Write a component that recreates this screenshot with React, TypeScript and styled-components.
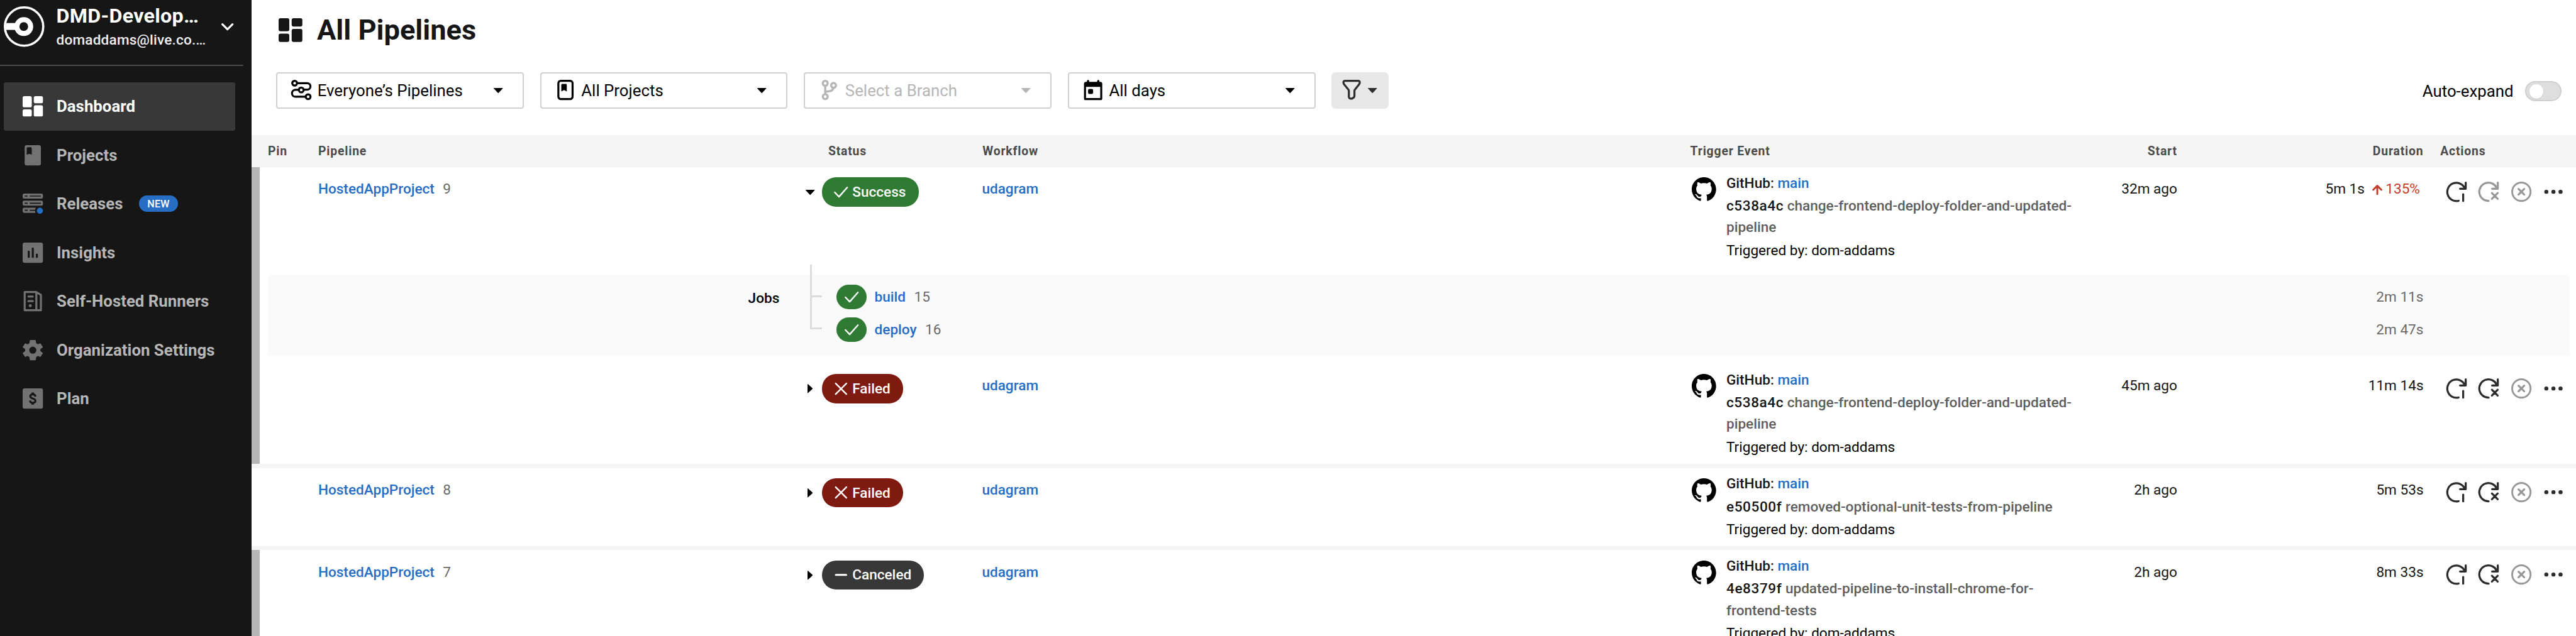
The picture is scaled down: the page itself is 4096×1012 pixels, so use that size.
import React from "react";
import styled, { createGlobalStyle, css } from "styled-components";

/* 1rem equals ten layout units; the whole page scales with the viewport width. */
const GlobalStyle = createGlobalStyle`
  html { font-size: calc(100vw / 253.8); }
  * { box-sizing: border-box; }
  body {
    margin: 0;
    overflow: hidden;
    background: #fff;
    color: #000;
    font-family: Roboto, "Liberation Sans", sans-serif;
    font-size: 1.4rem;
  }
`;

const blue = "#266dc4";

/* ---------- layout ---------- */

const Page = styled.div`
  display: flex;
  width: 100vw;
  height: 100vh;
  overflow: hidden;
`;

const Sidebar = styled.aside`
  flex: none;
  width: 24.8rem;
  height: 100%;
  background: #161616;
  color: #fff;
`;

const Main = styled.main`
  flex: 1;
  min-width: 0;
`;

/* ---------- icons ---------- */

const Svg = styled.svg<{ $w?: number; $h?: number }>`
  display: block;
  flex: none;
  width: ${(p) => (p.$w ?? 20) / 10}rem;
  height: ${(p) => (p.$h ?? p.$w ?? 20) / 10}rem;
  overflow: visible;
`;

const stroke = {
  fill: "none",
  stroke: "currentColor",
  strokeWidth: 2,
  strokeLinecap: "round" as const,
  strokeLinejoin: "round" as const,
};

const DashboardIcon = ({ size = 20 }: { size?: number }) => (
  <Svg $w={size} viewBox="0 0 20 20" fill="currentColor">
    <rect x="0" y="0" width="9" height="11" rx="1.6" />
    <rect x="0" y="13" width="9" height="7" rx="1.6" />
    <rect x="11" y="0" width="9" height="7" rx="1.6" />
    <rect x="11" y="9" width="9" height="11" rx="1.6" />
  </Svg>
);

const ProjectsIcon = () => (
  <Svg viewBox="0 0 20 20" fill="currentColor">
    <path
      fillRule="evenodd"
      d="M3.8 0H16.2A1.8 1.8 0 0 1 18 1.8V18.2A1.8 1.8 0 0 1 16.2 20H3.8A1.8 1.8 0 0 1 2 18.2V1.8A1.8 1.8 0 0 1 3.8 0ZM5 2A1 1 0 0 0 4 3V9.5L6.6 8.5L9 9.5V3A1 1 0 0 0 8 2Z"
    />
  </Svg>
);

const ReleasesIcon = () => (
  <Svg viewBox="0 0 20 20" fill="currentColor">
    <path
      fillRule="evenodd"
      d="M1.5 0H18.5A1.5 1.5 0 0 1 20 1.5V3.5A1.5 1.5 0 0 1 18.5 5H1.5A1.5 1.5 0 0 1 0 3.5V1.5A1.5 1.5 0 0 1 1.5 0ZM2 2V3H5V2ZM7 2V3H18V2Z"
    />
    <path
      fillRule="evenodd"
      d="M1.5 7H18.5A1.5 1.5 0 0 1 20 8.5V10.5A1.5 1.5 0 0 1 18.5 12H1.5A1.5 1.5 0 0 1 0 10.5V8.5A1.5 1.5 0 0 1 1.5 7ZM2 9V10H5V9ZM7 9V10H18V9Z"
    />
    <path
      fillRule="evenodd"
      d="M1.5 14H13L12.2 16H7V17H12.2L12.6 19H1.5A1.5 1.5 0 0 1 0 17.5V15.5A1.5 1.5 0 0 1 1.5 14ZM2 16V17H5V16Z"
    />
    <circle cx="17" cy="17" r="3" fill={blue} />
  </Svg>
);

const InsightsIcon = () => (
  <Svg viewBox="0 0 20 20">
    <rect width="20" height="20" rx="2" fill="currentColor" />
    <g fill="#161616">
      <rect x="5" y="8" width="2" height="7" rx=".6" />
      <rect x="9" y="5" width="2" height="10" rx=".6" />
      <rect x="13" y="11" width="2" height="4" rx=".6" />
    </g>
  </Svg>
);

const RunnersIcon = () => (
  <Svg viewBox="0 0 20 20" fill="currentColor">
    <path
      fillRule="evenodd"
      d="M2 0H13.6L18.4 2.9Q19 3.2 19 3.9V19A1 1 0 0 1 18 20H2A1 1 0 0 1 1 19V1A1 1 0 0 1 2 0ZM3 2V18H12.5V2ZM14.5 2.9V18H17V4.3Z"
    />
    <rect x="4.7" y="4.5" width="6.3" height="2" rx="1" />
    <rect x="4.7" y="9" width="6.3" height="2" rx="1" />
    <circle cx="7.5" cy="14.5" r="1.5" />
  </Svg>
);

const GearIcon = () => (
  <Svg viewBox="0 0 20 20">
    <path
      fill="currentColor"
      stroke="currentColor"
      strokeWidth="1"
      strokeLinejoin="round"
      fillRule="evenodd"
      d="M7.6.5H12.4L12.9 3.5L15.1 4.8L17.3 3.8L19.4 7L17 8.8V11.2L19.4 13L17.3 16.2L15.1 15.2L12.9 16.5L12.4 19.5H7.6L7.1 16.5L4.9 15.2L2.7 16.2L.6 13L3 11.2V8.8L.6 7L2.7 3.8L4.9 4.8L7.1 3.5ZM10 6A4 4 0 1 0 10 14A4 4 0 1 0 10 6Z"
    />
  </Svg>
);

const PlanIcon = () => (
  <Svg viewBox="0 0 20 20">
    <rect width="20" height="20" rx="1.8" fill="currentColor" />
    <g fill="none" stroke="#161616" strokeWidth="1.9">
      <path d="M12.6 8.1C12.5 6.7 11.5 5.9 10 5.9C8.5 5.9 7.5 6.7 7.5 7.8C7.5 9.2 8.8 9.6 10 10C11.4 10.4 12.6 10.9 12.6 12.3C12.6 13.5 11.5 14.2 10 14.2C8.5 14.2 7.4 13.4 7.4 11.9" />
      <path d="M10 4V6M10 14V16" strokeWidth="2.4" />
    </g>
  </Svg>
);

const PipelinesIcon = () => (
  <Svg viewBox="0 0 20 20">
    <g {...stroke} strokeLinecap="butt">
      <circle cx="3.4" cy="3.3" r="2.35" />
      <circle cx="9.9" cy="10" r="2.35" />
      <circle cx="16.7" cy="16.7" r="2.35" />
      <path d="M5.8 3.3H15.8A3.2 3.2 0 0 1 15.8 9.7H12.2" />
      <path d="M14.3 16.7H4.2A3.3 3.3 0 0 1 4.2 9.9H7.6" />
    </g>
  </Svg>
);

const ProjectOutlineIcon = () => (
  <Svg viewBox="0 0 20 20">
    <rect x="3" y="1" width="14" height="18" rx="2.4" {...stroke} />
    <path
      fill="currentColor"
      d="M6.8 4H10.4A.9.9 0 0 1 11.3 4.9V11.5L8.6 10L5.9 11.5V4.9A.9.9 0 0 1 6.8 4Z"
    />
  </Svg>
);

const BranchIcon = () => (
  <Svg viewBox="0 0 20 20">
    <g {...stroke} strokeLinecap="butt" strokeWidth="2.1">
      <circle cx="6.3" cy="3.4" r="2.4" />
      <circle cx="14.5" cy="5.5" r="2.4" />
      <circle cx="6.3" cy="16.6" r="2.4" />
      <path d="M6.3 5.8V14.2" />
      <path d="M14.2 7.9C13.9 10.2 12.6 11.1 10.4 11.2C8.2 11.3 6.8 11.5 6.3 12.6" />
    </g>
  </Svg>
);

const CalendarIcon = () => (
  <Svg viewBox="0 0 20 20" fill="currentColor">
    <path
      fillRule="evenodd"
      d="M3 2H17A2 2 0 0 1 19 4V18.4A1.6 1.6 0 0 1 17.4 20H2.6A1.6 1.6 0 0 1 1 18.4V4A2 2 0 0 1 3 2ZM3 7V18H17V7Z"
    />
    <rect x="3.9" y=".2" width="2.2" height="3.6" rx="1" />
    <rect x="14" y=".2" width="2.2" height="3.6" rx="1" />
    <rect x="5" y="9" width="5" height="5" rx="1.4" />
  </Svg>
);

const FilterIcon = () => (
  <Svg viewBox="0 0 20 20">
    <path
      {...stroke}
      d="M3.4 1H16.6Q18.4 1.2 18 3Q17.8 4 17 5L13.3 9.6Q12.8 10.2 12.8 11V15.8Q12.8 16.8 12 17.5Q10.6 18.7 9 18.6Q7.4 18.2 7.3 16.6V11Q7.2 10.2 6.8 9.6L3 5Q2.2 4 2 3Q1.6 1.2 3.4 1Z"
    />
  </Svg>
);

const ChevronIcon = () => (
  <Svg $w={12} $h={7} viewBox="0 0 12 7">
    <path {...stroke} d="M1 1L6 6L11 1" />
  </Svg>
);

const CaretDown = () => (
  <Svg $w={9} $h={5} viewBox="0 0 9 5" fill="currentColor">
    <path d="M.3 0H8.7Q9.1.1 8.9.5L4.9 4.8Q4.5 5.1 4.1 4.8L.1.5Q-.1.1.3 0Z" />
  </Svg>
);

const CaretRight = () => (
  <Svg $w={5} $h={9} viewBox="0 0 5 9" fill="currentColor">
    <path d="M0 .3Q.1-.1.5.1L4.8 4.1Q5.1 4.5 4.8 4.9L.5 8.9Q.1 9.1 0 8.7Z" />
  </Svg>
);

const CheckIcon = () => (
  <Svg $w={14} $h={11} viewBox="0 0 14 11">
    <path {...stroke} strokeWidth="1.5" d="M.8 5.6L5 10L13.1.8" />
  </Svg>
);

const CrossIcon = () => (
  <Svg $w={14} $h={12} viewBox="0 0 14 12">
    <path {...stroke} strokeWidth="1.5" d="M1.7.7L12.3 11.3M12.3.7L1.7 11.3" />
  </Svg>
);

const MinusIcon = () => (
  <Svg $w={14} $h={12} viewBox="0 0 14 12">
    <path {...stroke} strokeWidth="1.9" d="M1.9 6H12.1" />
  </Svg>
);

const ArrowUpIcon = () => (
  <Svg $w={10} viewBox="0 0 10 10">
    <path {...stroke} strokeWidth="1.8" d="M5 9.2V1.2M1 5L5 1L9 5" />
  </Svg>
);

const GithubIcon = () => (
  <Svg $w={24} viewBox="0 0 16 16" fill="#000">
    <path d="M8 0C3.58 0 0 3.58 0 8c0 3.54 2.29 6.53 5.47 7.59.4.07.55-.17.55-.38 0-.19-.01-.82-.01-1.49-2.01.37-2.53-.49-2.69-.94-.09-.23-.48-.94-.82-1.13-.28-.15-.68-.52-.01-.53.63-.01 1.08.58 1.23.82.72 1.21 1.87.87 2.33.66.07-.52.28-.87.51-1.07-1.78-.2-3.64-.89-3.64-3.95 0-.87.31-1.59.82-2.15-.08-.2-.36-1.02.08-2.12 0 0 .67-.21 2.2.82.64-.18 1.32-.27 2-.27s1.36.09 2 .27c1.53-1.04 2.2-.82 2.2-.82.44 1.1.16 1.92.08 2.12.51.56.82 1.27.82 2.15 0 3.07-1.87 3.75-3.65 3.95.29.25.54.73.54 1.48 0 1.07-.01 1.93-.01 2.2 0 .21.15.46.55.38A8.01 8.01 0 0 0 16 8c0-4.42-3.58-8-8-8Z" />
  </Svg>
);

const RerunIcon = () => (
  <Svg viewBox="0 0 20 20">
    <path {...stroke} d="M18 6.4A9 9 0 1 0 12 18.9M19 1V7H13.4M16.5 12.4V19" />
  </Svg>
);

const RerunFailedIcon = () => (
  <Svg viewBox="0 0 20 20">
    <path
      {...stroke}
      d="M18 6.4A9 9 0 1 0 9.9 19M19 1V7H13.4M13.2 11.3L18.9 17M18.9 11.3L13.2 17"
    />
  </Svg>
);

const CancelIcon = () => (
  <Svg viewBox="0 0 20 20">
    <circle cx="10" cy="10" r="9.05" {...stroke} strokeWidth="1.8" />
    <path {...stroke} d="M7.2 7.2L12.8 12.8M12.8 7.2L7.2 12.8" />
  </Svg>
);

const MoreIcon = () => (
  <Svg viewBox="0 0 20 20" fill="currentColor">
    <circle cx="3" cy="10" r="2" />
    <circle cx="10" cy="10" r="2" />
    <circle cx="17" cy="10" r="2" />
  </Svg>
);

const LogoIcon = () => (
  <Svg $w={40} viewBox="0 0 40 40">
    <circle cx="20" cy="20" r="18.9" fill="none" stroke="#fff" strokeWidth="2.2" />
    <circle cx="19.7" cy="20" r="6.8" fill="none" stroke="#fff" strokeWidth="5" />
    <path d="M2 16.5H12V23.3H2Z" fill="#fff" />
  </Svg>
);

/* ---------- sidebar ---------- */

const OrgHeader = styled.div`
  display: flex;
  width: 24rem;
  height: 6.5rem;
  padding: 0.4rem 1rem 0 0.4rem;
  border-bottom: 2px solid #4a4a4a;
`;

const OrgLogo = styled.div`
  padding-top: 0.2rem;
`;

const OrgText = styled.div`
  width: 16.25rem;
  margin-left: 1.15rem;
`;

const OrgName = styled.div`
  font-size: 2rem;
  line-height: 2.4rem;
  font-weight: 700;
  letter-spacing: 0.016rem;
  white-space: nowrap;
`;

const OrgEmail = styled.div`
  font-size: 1.4rem;
  line-height: 2.4rem;
  font-weight: 500;
  letter-spacing: 0.012rem;
  color: #f0f0f0;
  white-space: nowrap;
`;

const OrgChevron = styled.div`
  padding-top: 1.9rem;
`;

const Nav = styled.nav`
  display: flex;
  flex-direction: column;
  padding: 1.6rem 1.6rem 0 0.4rem;
`;

const NavItem = styled.a<{ $active?: boolean }>`
  display: flex;
  align-items: center;
  height: 4.8rem;
  padding-left: 1.8rem;
  border-radius: 0.2rem;
  font-size: 1.6rem;
  font-weight: 700;
  color: #727272;
  ${(p) =>
    p.$active &&
    css`
      background: #383838;
      color: #fff;
    `}
`;

const NavLabel = styled.span<{ $active?: boolean }>`
  margin-left: 1.38rem;
  color: ${(p) => (p.$active ? "#fff" : "#b6b6b6")};
`;

const NewBadge = styled.span`
  display: flex;
  align-items: center;
  justify-content: center;
  width: 3.8rem;
  height: 1.6rem;
  margin-left: 1.6rem;
  border-radius: 0.8rem;
  background: ${blue};
  color: #fff;
  font-size: 1rem;
  font-weight: 500;
  letter-spacing: 0.02rem;
`;

/* ---------- page header ---------- */

const TitleBar = styled.header`
  display: flex;
  align-items: center;
  height: 5.88rem;
  padding-left: 2.64rem;
  color: #161616;
`;

const Title = styled.h1`
  margin: 0 0 0 1.45rem;
  font-size: 2.8rem;
  line-height: 3.2rem;
  font-weight: 700;
`;

const Toolbar = styled.div`
  display: flex;
  align-items: center;
  height: 3.6rem;
  margin: 1.22rem 1.4rem 2.6rem 2.4rem;
`;

const Select = styled.button<{ $disabled?: boolean }>`
  display: flex;
  align-items: center;
  width: 24.4rem;
  height: 3.6rem;
  margin: 0 1.6rem 0 0;
  padding: 0 1.95rem 0 1.38rem;
  border: 2px solid #d0d0d0;
  border-radius: 0.25rem;
  background: #fff;
  font: inherit;
  font-size: 1.6rem;
  text-align: left;
  color: ${(p) => (p.$disabled ? "#b6b6b6" : "#000")};
`;

const SelectLabel = styled.span`
  flex: 1;
  margin-left: 0.57rem;
`;

const FilterButton = styled.button`
  display: flex;
  align-items: center;
  gap: 0.55rem;
  width: 5.6rem;
  height: 3.6rem;
  padding: 0 0 0 1rem;
  border: 0;
  border-radius: 0.4rem;
  background: #e8e8e8;
  color: #2e2e2e;
`;

const AutoExpand = styled.label`
  display: flex;
  align-items: center;
  gap: 1.16rem;
  margin: 0.2rem 0 0 auto;
  font-size: 1.6rem;
`;

const Toggle = styled.span`
  display: flex;
  align-items: center;
  width: 3.6rem;
  height: 2rem;
  padding-left: 0.28rem;
  border: 2px solid #cfcfcf;
  border-radius: 1rem;
  background: #dedede;
`;

const Knob = styled.span`
  width: 1.4rem;
  height: 1.4rem;
  border-radius: 50%;
  background: #fff;
  box-shadow: 0 0.05rem 0.1rem rgba(0, 0, 0, 0.12);
`;

/* ---------- table ---------- */

const columns = "4.95rem 48rem 17.4rem 69.75rem 39rem 9.01rem 24.27rem 1fr";

const HeadRow = styled.div`
  display: grid;
  grid-template-columns: ${columns};
  align-items: center;
  height: 3.2rem;
  padding-left: 1.6rem;
  background: #f5f5f5;
`;

const HeadCell = styled.div<{ $right?: boolean; $indent?: number }>`
  padding-left: ${(p) => p.$indent ?? 0}rem;
  font-size: 1.2rem;
  font-weight: 700;
  letter-spacing: 0.052rem;
  color: #4b4b4b;
  text-align: ${(p) => (p.$right ? "right" : "left")};
`;

const Group = styled.section`
  display: flex;
`;

const Stripe = styled.div<{ $visible?: boolean }>`
  flex: none;
  width: 0.8rem;
  margin-right: 0.8rem;
  background: ${(p) => (p.$visible ? "#b6b6b6" : "#fff")};
`;

const GroupBody = styled.div`
  flex: 1;
  min-width: 0;
`;

const Separator = styled.div`
  height: 0.4rem;
  background: #f5f5f5;
`;

const Row = styled.div<{ $tall?: boolean }>`
  display: grid;
  grid-template-columns: ${columns};
  align-items: start;
  height: ${(p) => (p.$tall ? 9.85 : 7.7)}rem;
  padding-top: 1rem;
`;

const Cell = styled.div<{ $right?: boolean }>`
  line-height: 2.4rem;
  white-space: nowrap;
  text-align: ${(p) => (p.$right ? "right" : "left")};
  color: #161616;
`;

const Link = styled.a`
  color: ${blue};
  font-weight: 500;
`;

const RunNumber = styled.span`
  margin-left: 0.83rem;
  color: #6a6a6a;
`;

const StatusCell = styled.div`
  display: flex;
  align-items: center;
`;

const CaretSlot = styled.div`
  display: flex;
  justify-content: center;
  width: 0.9rem;
  margin-right: 0.75rem;
`;

const tones = { success: "#307b34", failed: "#7f1a11", canceled: "#383838" };

const Badge = styled.span<{ $tone: keyof typeof tones }>`
  display: flex;
  align-items: center;
  gap: 0.4rem;
  height: 2.88rem;
  padding: 0 1.25rem 0 1.18rem;
  border-radius: 1.4rem;
  background: ${(p) => tones[p.$tone]};
  color: #fff;
  font-weight: 500;
`;

const Trigger = styled.div`
  display: flex;
  padding-left: 0.2rem;
`;

const TriggerText = styled.div`
  width: 35.3rem;
  margin: -0.47rem 0 0 0.99rem;
  font-weight: 500;
  line-height: 2.11rem;
  color: #161616;
`;

const Line = styled.div`
  margin-bottom: 0.15rem;
`;

const Commit = styled.span`
  letter-spacing: 0.036rem;
`;

const Message = styled.span`
  color: #5e5e5e;
`;

const By = styled.div`
  font-weight: 400;
  color: #000;
`;

const Duration = styled(Cell)`
  display: flex;
  align-items: center;
  justify-content: flex-end;
`;

const Trend = styled.span`
  display: flex;
  align-items: center;
  gap: 0.35rem;
  margin: 0 0.35rem 0 0.72rem;
  color: #c23d2b;
`;

const Actions = styled.div`
  display: flex;
  gap: 1.2rem;
  padding: 0.4rem 0 0 2.23rem;
`;

const ActionButton = styled.button<{ $off?: boolean }>`
  padding: 0;
  border: 0;
  background: none;
  color: ${(p) => (p.$off ? "#989898" : "#2c2c2c")};
`;

/* ---------- expanded jobs ---------- */

const Jobs = styled.div`
  display: grid;
  grid-template-columns: 52.95rem 1fr;
  height: 8rem;
  margin: 0.75rem 0.6rem 0.8rem 0;
  background: #fafafa;
`;

const JobsLabel = styled.div`
  padding: 1.14rem 2.56rem 0 0;
  line-height: 2.4rem;
  font-weight: 500;
  text-align: right;
`;

const JobsBody = styled.div`
  display: flex;
`;

const Tree = styled.div`
  width: 1.2rem;
  height: 6.4rem;
  margin: -1rem 1.4rem 0 0.45rem;
  border-left: 0.2rem solid #dcdcdc;
`;

const TreeArm = styled.div`
  height: 3.2rem;
  border-bottom: 0.2rem solid #dcdcdc;
`;

const JobList = styled.div`
  flex: 1;
  padding-top: 1rem;
`;

const JobRow = styled.div`
  display: flex;
  align-items: center;
  height: 2.4rem;
  margin-bottom: 0.8rem;
`;

const JobPill = styled.span`
  display: flex;
  align-items: center;
  justify-content: center;
  width: 3rem;
  height: 2.4rem;
  margin-right: 0.77rem;
  border-radius: 1.2rem;
  background: ${tones.success};
  color: #fff;
`;

const JobTime = styled.span`
  margin: 0 14.43rem 0 auto;
  color: #6a6a6a;
`;

/* ---------- data ---------- */

const navItems = [
  { label: "Dashboard", Icon: DashboardIcon, active: true },
  { label: "Projects", Icon: ProjectsIcon },
  { label: "Releases", Icon: ReleasesIcon, isNew: true },
  { label: "Insights", Icon: InsightsIcon },
  { label: "Self-Hosted Runners", Icon: RunnersIcon },
  { label: "Organization Settings", Icon: GearIcon },
  { label: "Plan", Icon: PlanIcon },
];

const selects = [
  { label: "Everyone’s Pipelines", Icon: PipelinesIcon },
  { label: "All Projects", Icon: ProjectOutlineIcon },
  { label: "Select a Branch", Icon: BranchIcon, disabled: true },
  { label: "All days", Icon: CalendarIcon },
];

const statusIcons = {
  success: CheckIcon,
  failed: CrossIcon,
  canceled: MinusIcon,
};

const statusLabels = {
  success: "Success",
  failed: "Failed",
  canceled: "Canceled",
};

interface Run {
  status: keyof typeof tones;
  number?: number;
  commit: string;
  message: string;
  start: string;
  duration: string;
  trend?: string;
  tall?: boolean;
  jobs?: { name: string; number: number; time: string }[];
}

const groups: { striped: boolean; runs: Run[] }[] = [
  {
    striped: true,
    runs: [
      {
        status: "success",
        number: 9,
        commit: "c538a4c",
        message: "change-frontend-deploy-folder-and-updated-pipeline",
        start: "32m ago",
        duration: "5m 1s",
        trend: "135%",
        tall: true,
        jobs: [
          { name: "build", number: 15, time: "2m 11s" },
          { name: "deploy", number: 16, time: "2m 47s" },
        ],
      },
      {
        status: "failed",
        commit: "c538a4c",
        message: "change-frontend-deploy-folder-and-updated-pipeline",
        start: "45m ago",
        duration: "11m 14s",
        tall: true,
      },
    ],
  },
  {
    striped: false,
    runs: [
      {
        status: "failed",
        number: 8,
        commit: "e50500f",
        message: "removed-optional-unit-tests-from-pipeline",
        start: "2h ago",
        duration: "5m 53s",
      },
    ],
  },
  {
    striped: true,
    runs: [
      {
        status: "canceled",
        number: 7,
        commit: "4e8379f",
        message: "updated-pipeline-to-install-chrome-for-frontend-tests",
        start: "2h ago",
        duration: "8m 33s",
        tall: true,
      },
    ],
  },
];

/* ---------- components ---------- */

const RunRow = ({ run }: { run: Run }) => {
  const StatusIcon = statusIcons[run.status];
  return (
    <>
      <Row $tall={run.tall}>
        <span />
        <Cell>
          {run.number !== undefined && (
            <>
              <Link>HostedAppProject</Link>
              <RunNumber>{run.number}</RunNumber>
            </>
          )}
        </Cell>
        <StatusCell>
          <CaretSlot>{run.jobs ? <CaretDown /> : <CaretRight />}</CaretSlot>
          <Badge $tone={run.status}>
            <StatusIcon />
            {statusLabels[run.status]}
          </Badge>
        </StatusCell>
        <Cell>
          <Link>udagram</Link>
        </Cell>
        <Trigger>
          <GithubIcon />
          <TriggerText>
            <Line>
              GitHub: <Link>main</Link>
            </Line>
            <Line>
              <Commit>{run.commit}</Commit> <Message>{run.message}</Message>
            </Line>
            <By>Triggered by: dom-addams</By>
          </TriggerText>
        </Trigger>
        <Cell $right>{run.start}</Cell>
        <Duration>
          {run.duration}
          {run.trend && (
            <Trend>
              <ArrowUpIcon />
              {run.trend}
            </Trend>
          )}
        </Duration>
        <Actions>
          <ActionButton>
            <RerunIcon />
          </ActionButton>
          <ActionButton $off={run.status === "success"}>
            <RerunFailedIcon />
          </ActionButton>
          <ActionButton $off>
            <CancelIcon />
          </ActionButton>
          <ActionButton>
            <MoreIcon />
          </ActionButton>
        </Actions>
      </Row>
      {run.jobs && (
        <Jobs>
          <JobsLabel>Jobs</JobsLabel>
          <JobsBody>
            <Tree>
              <TreeArm />
              <TreeArm />
            </Tree>
            <JobList>
              {run.jobs.map((job) => (
                <JobRow key={job.name}>
                  <JobPill>
                    <CheckIcon />
                  </JobPill>
                  <Link>{job.name}</Link>
                  <RunNumber>{job.number}</RunNumber>
                  <JobTime>{job.time}</JobTime>
                </JobRow>
              ))}
            </JobList>
          </JobsBody>
        </Jobs>
      )}
    </>
  );
};

export default function App() {
  return (
    <Page>
      <GlobalStyle />
      <Sidebar>
        <OrgHeader>
          <OrgLogo>
            <LogoIcon />
          </OrgLogo>
          <OrgText>
            <OrgName>DMD-Develop…</OrgName>
            <OrgEmail>domaddams@live.co.…</OrgEmail>
          </OrgText>
          <OrgChevron>
            <ChevronIcon />
          </OrgChevron>
        </OrgHeader>
        <Nav>
          {navItems.map(({ label, Icon, active, isNew }) => (
            <NavItem key={label} $active={active}>
              <Icon />
              <NavLabel $active={active}>{label}</NavLabel>
              {isNew && <NewBadge>NEW</NewBadge>}
            </NavItem>
          ))}
        </Nav>
      </Sidebar>
      <Main>
        <TitleBar>
          <DashboardIcon size={23.4} />
          <Title>All Pipelines</Title>
        </TitleBar>
        <Toolbar>
          {selects.map(({ label, Icon, disabled }) => (
            <Select key={label} $disabled={disabled}>
              <Icon />
              <SelectLabel>{label}</SelectLabel>
              <CaretDown />
            </Select>
          ))}
          <FilterButton>
            <FilterIcon />
            <CaretDown />
          </FilterButton>
          <AutoExpand>
            Auto-expand
            <Toggle>
              <Knob />
            </Toggle>
          </AutoExpand>
        </Toolbar>
        <HeadRow>
          <HeadCell>Pin</HeadCell>
          <HeadCell>Pipeline</HeadCell>
          <HeadCell $indent={2.25}>Status</HeadCell>
          <HeadCell $indent={0.05}>Workflow</HeadCell>
          <HeadCell $indent={0.03}>Trigger Event</HeadCell>
          <HeadCell $right>Start</HeadCell>
          <HeadCell $right>Duration</HeadCell>
          <HeadCell $indent={1.65}>Actions</HeadCell>
        </HeadRow>
        {groups.map((group, index) => (
          <React.Fragment key={index}>
            {index > 0 && <Separator />}
            <Group>
              <Stripe $visible={group.striped} />
              <GroupBody>
                {group.runs.map((run, i) => (
                  <RunRow key={i} run={run} />
                ))}
              </GroupBody>
            </Group>
          </React.Fragment>
        ))}
      </Main>
    </Page>
  );
}
